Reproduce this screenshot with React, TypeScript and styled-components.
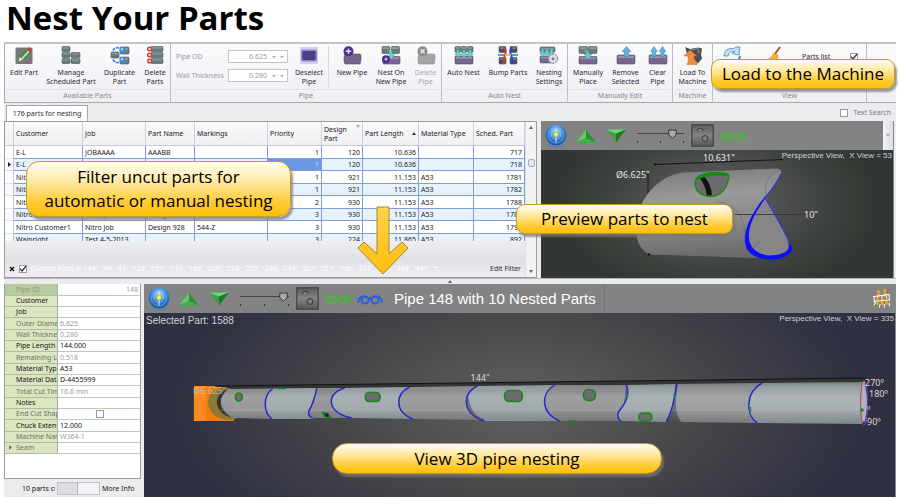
import React from 'react';
import styled, { createGlobalStyle, css } from 'styled-components';

const UI = '"Noto Sans", "Open Sans", sans-serif';
const ARIAL = '"Liberation Sans", Arial, sans-serif';
const DISPLAY = '"Open Sans", "Noto Sans", sans-serif';

const GlobalStyle = createGlobalStyle`
  *, *::before, *::after { box-sizing: border-box; }
  body { margin: 0; background: #fff; font-family: ${UI}; font-size: 7px; line-height: 9px; color: #2f2838; }
  button, input { font: inherit; color: inherit; margin: 0; padding: 0; }
  button { background: none; border: 0; }
`;

/* ---------- page frame ---------- */

const Page = styled.main`
  position: relative;
  padding: 0 4px 4px;
  overflow: hidden;
`;

const Title = styled.h1`
  margin: 0;
  padding-left: 2px;
  font: 700 33px/36px ${DISPLAY};
  padding-bottom: 6px;
  color: #000;
`;

const AppWindow = styled.div`
  background: #ececee;
`;

/* ---------- ribbon ---------- */

const Ribbon = styled.header`
  display: flex;
  border: 1px solid #a9abb2;
  border-width: 2px 0 1px 1px;
  border-top-color: #c4c5ca;
  background: linear-gradient(#fbfbfd, #eeeff3);
`;

const Group = styled.section<{ $grow?: boolean }>`
  display: flex;
  flex-direction: column;
  flex: ${p => (p.$grow ? '1 0 auto' : '0 0 auto')};
  border-right: 1px solid #bcbdc8;
`;

const GroupBody = styled.div`
  display: flex;
  height: 45px;
`;

const GroupName = styled.h2`
  margin: 0 2px;
  height: 13px;
  border-top: 1px solid #e2e2e8;
  font: 400 7px/12px ${UI};
  text-align: center;
  color: #85858f;
`;

const RibbonButton = styled.button<{ $w: number }>`
  display: flex;
  flex-direction: column;
  align-items: center;
  width: ${p => p.$w}px;
  padding-top: 2px;
  gap: 3px;
  white-space: pre;
  text-align: center;
  svg { display: block; width: 20px; height: 19px; }
  &:disabled { color: #a9a9b0; }
`;

const RibbonEnd = styled.div`
  flex: none;
  width: 29px;
`;

const Divider = styled.span`
  width: 1px;
  margin: 2px 3px 2px 0;
  background: #d8d8e0;
`;

const Fields = styled.div`
  display: grid;
  grid-template-columns: 52px 60px;
  grid-auto-rows: 13px;
  row-gap: 6px;
  align-items: center;
  padding: 6px 2px 0 5px;
  color: #9a9aa4;
  label { white-space: nowrap; }
`;

const SpinBox = styled.span`
  display: flex;
  align-items: center;
  height: 13px;
  border: 1px solid #c3c3ca;
  background: #fff;
  input { width: 38px; border: 0; background: none; text-align: right; outline: 0; }
  svg { width: 20px; height: 6px; }
`;

const ViewOptions = styled.div`
  display: flex;
  align-items: flex-start;
  padding: 8px 0 0 3px;
  label { display: flex; gap: 20px; align-items: center; white-space: nowrap; }
`;

const CHECK = `url("data:image/svg+xml,%3Csvg xmlns='http://www.w3.org/2000/svg' viewBox='0 0 8 8'%3E%3Cpath d='M1.2 3.6 3 6 7.4.6' fill='none' stroke='%23222' stroke-width='1.2'/%3E%3C/svg%3E")`;

const Check = styled.input.attrs({ type: 'checkbox' })`
  appearance: none;
  flex: none;
  width: 8px;
  height: 8px;
  border: 1px solid #9a9aa2;
  background: #fff;
  &:checked { background: #fff ${CHECK} center / 8px 8px no-repeat; }
`;

/* ---------- tab strip ---------- */

const TabStrip = styled.nav`
  display: flex;
  justify-content: space-between;
  align-items: flex-end;
  height: 18px;
  padding: 0 5px 0 2px;
`;

const Tab = styled.button`
  height: 16px;
  width: 82px;
  border: 1px solid #a5a7ae;
  border-bottom: 0;
  background: #fff;
  line-height: 15px;
  text-align: center;
`;

const SearchToggle = styled.label`
  display: flex;
  align-items: center;
  gap: 6px;
  height: 17px;
  color: #777781;
`;

/* ---------- upper work area ---------- */

const UpperPane = styled.div`
  display: grid;
  grid-template-columns: minmax(0, 533fr) 4px minmax(0, 353fr) 2px;
  height: 157px;
`;

const Panel = styled.section`
  display: flex;
  flex-direction: column;
  min-width: 0;
  border: 1px solid #9a9ca4;
  background: #fff;
`;

const GridRow = styled.div`
  display: flex;
  flex: 1;
  min-height: 0;
`;

const GridMain = styled.div`
  display: flex;
  flex-direction: column;
  flex: 1;
  min-width: 0;
`;

const TableClip = styled.div`
  height: 119px;
  overflow: hidden;
`;

const PartsTable = styled.table`
  width: 100%;
  table-layout: fixed;
  border-collapse: separate;
  border-spacing: 0;
  color: #1c1824;
`;

const HeadCell = styled.th`
  height: 24px;
  padding: 0 2px;
  border-right: 1px solid #cfd0d8;
  border-bottom: 1px solid #c7c9d2;
  background: linear-gradient(#fafafb, #f0f0f3);
  font-weight: 400;
  text-align: left;
  white-space: nowrap;
  line-height: 9px;
  overflow: hidden;
`;

const HeadInner = styled.span<{ $top?: boolean }>`
  display: flex;
  align-items: center;
  justify-content: space-between;
  white-space: pre;
  svg { width: 4px; height: 3px; flex: none; ${p => p.$top && 'align-self: flex-start;'} }
`;

const BodyRow = styled.tr`
  height: 12px;
  &:nth-child(odd) { height: 13px; }
  &:nth-child(even) td { background: #e6f2fe; }
`;

const Cell = styled.td<{ $num?: boolean }>`
  padding: 0 2px;
  border-right: 1px solid #7f9ddb;
  border-bottom: 1px solid #7f9ddb;
  text-align: ${p => (p.$num ? 'right' : 'left')};
  white-space: nowrap;
  overflow: hidden;
  line-height: 9px;
  ${BodyRow}:nth-child(even) &[aria-selected='true'] { background: #6b97e4; color: #cfe0ff; }
`;

const MarkCell = styled.td`
  padding: 0;
  border-right: 1px solid #c7c9d2;
  border-bottom: 1px solid #e3e4ea;
  text-align: center;
  ${BodyRow}:nth-child(even) && { background: #fafafb; }
  svg { display: block; width: 3px; height: 5px; margin: 0 auto; }
`;

const GridGap = styled.div`
  flex: 1;
  background: linear-gradient(#efeff1, #dfe0e4);
`;

const FilterBar = styled.div`
  display: flex;
  align-items: center;
  gap: 4px;
  height: 17px;
  padding: 0 4px;
  background: linear-gradient(#e0e1e5, #eeeef0);
  svg { width: 6px; height: 6px; flex: none; }
`;

const FilterText = styled.span`
  flex: 1;
  overflow: hidden;
  white-space: nowrap;
  color: #fff;
`;

const ScrollBar = styled.div`
  display: flex;
  flex-direction: column;
  align-items: center;
  justify-content: space-between;
  width: 11px;
  padding: 4px 0;
  background: #f3f3f5;
  border-left: 1px solid #e0e0e4;
  svg { width: 4px; height: 3px; }
`;

const ScrollThumb = styled.span`
  width: 7px;
  height: 8px;
  margin: 30px 0 auto;
  border: 1px solid #a9abb4;
  border-radius: 2px;
  background: #e4e5ea;
`;

const Splitter = styled.div<{ $vertical?: boolean }>`
  display: flex;
  align-items: center;
  justify-content: center;
  background: #ececee;
  ${p => !p.$vertical && css`height: 6px; border-top: 1px solid #b6b7bd;`}
  svg { width: 4px; height: 3px; }
`;

/* ---------- 3D viewers ---------- */

const Viewer = styled.section`
  display: flex;
  flex-direction: column;
  min-width: 0;
  border-right: 1px solid #888;
`;

const ViewerBar = styled.div`
  display: flex;
  align-items: center;
  height: 29px;
  padding-left: 4px;
  background: #838383;
`;

const Tool = styled.button<{ $w: number }>`
  display: flex;
  align-items: center;
  justify-content: center;
  flex: none;
  width: ${p => p.$w}px;
  height: 26px;
  svg { display: block; flex: none; }
`;

const THUMB = `url("data:image/svg+xml,%3Csvg xmlns='http://www.w3.org/2000/svg' viewBox='0 0 9 12'%3E%3Cpath d='M.8 1h7.4v5L4.5 9.2.8 6z' fill='%23aaa' stroke='%23333'/%3E%3C/svg%3E")`;

const SliderBox = styled.span<{ $w: number }>`
  display: flex;
  flex-direction: column;
  flex: none;
  width: ${p => p.$w}px;
  margin: 1px 6px 0 10px;
  input {
    appearance: none;
    width: 100%;
    height: 12px;
    background: linear-gradient(#444, #444) center 4px / 100% 1px no-repeat;
  }
  input::-webkit-slider-thumb {
    appearance: none;
    width: 9px;
    height: 12px;
    background: ${THUMB};
  }
`;

const Ticks = styled.span`
  display: flex;
  justify-content: space-between;
  height: 2px;
  i { width: 1px; background: #333; }
`;

const BarEnd = styled.button`
  align-self: stretch;
  width: 10px;
  margin-left: auto;
  background: linear-gradient(90deg, #f4f5f9, #d9dce8);
  svg { display: block; width: 4px; height: 3px; margin: auto; }
`;

const ViewerTitle = styled.h2`
  margin: 0;
  padding: 0 8px 0 11px;
  border-right: 1px solid #757575;
  font: 400 15px/28px ${ARIAL};
  color: #fff;
  white-space: nowrap;
`;

const EndTool = styled.button`
  margin: 0 3px 0 auto;
  svg { display: block; width: 20px; height: 22px; }
`;

const Scene = styled.div<{ $kind: 'part' | 'pipe' }>`
  position: relative;
  flex: 1;
  min-height: 0;
  background: ${p =>
    p.$kind === 'part'
      ? 'radial-gradient(ellipse 46% 75% at 50% 42%, #636463, #484b48 50%, #303631)'
      : 'radial-gradient(ellipse 46% 95% at 50% 50%, #606060, #48484a 50%, #2f3041)'};
  > svg { display: block; width: 100%; height: 100%; }
`;

const SceneNote = styled.p<{ $side: 'left' | 'right'; $large?: boolean }>`
  position: absolute;
  top: 1px;
  ${p => p.$side}: ${p => (p.$side === 'left' ? 2 : 1)}px;
  margin: 0;
  font: ${p => (p.$large ? '400 10px/13px' : '400 8px/9px')} ${ARIAL};
  white-space: pre;
  color: #d2d2d6;
`;

/* ---------- lower work area ---------- */

const LowerPane = styled.div`
  display: grid;
  grid-template-columns: 137px minmax(0, 1fr);
  column-gap: 3px;
  height: 213px;
`;

const Side = styled.aside`
  display: flex;
  flex-direction: column;
  min-width: 0;
`;

const PropertyList = styled.dl`
  flex: 1;
  margin: 0;
  border: 1px solid #9a9ca4;
  border-top: 0;
  background: #fff;
`;

const Property = styled.div<{ $dim?: boolean; $head?: boolean }>`
  display: grid;
  grid-template-columns: 53px minmax(0, 1fr);
  height: 11px;
  line-height: 10px;
  color: ${p => (p.$dim ? '#9b9ba3' : '#181420')};
  &:nth-child(3n + 1) { height: 12px; line-height: 11px; }
  dt {
    display: flex;
    overflow: hidden;
    white-space: nowrap;
    border-right: 1px solid #9db4b4;
    border-bottom: 1px solid #a9bf9f;
    background: ${p => (p.$head ? '#b9c9a0' : '#dbe5bf')};
    color: ${p => (p.$head ? '#8b9a82' : p.$dim ? '#697563' : '#181420')};
  }
  dd {
    margin: 0;
    padding: 0 2px;
    border-bottom: 1px solid #b9cdb4;
    text-align: ${p => (p.$head ? 'right' : 'left')};
  }
  dd input { display: block; margin: 1px auto 0 36px; }
`;

const Expander = styled.span`
  flex: none;
  width: 11px;
  svg { width: 3px; height: 5px; margin-left: 4px; }
`;

const SideFooter = styled.footer`
  display: grid;
  grid-template-columns: 33px 43px 1fr;
  align-items: center;
  gap: 2px;
  height: 18px;
  padding-left: 18px;
  white-space: nowrap;
  color: #181420;
  span { overflow: hidden; }
`;

const Toggle = styled.button`
  height: 13px;
  border: 1px solid #c3c4ca;
  background: linear-gradient(90deg, #dcdde2 19px, #b6b7be 19px 20px, #f3f3f6 20px);
`;

/* ---------- callouts ---------- */

const Callout = styled.p<{ $x: number; $y: number; $w: number; $h: number }>`
  position: absolute;
  left: ${p => p.$x}px;
  top: ${p => p.$y}px;
  display: flex;
  align-items: center;
  justify-content: center;
  width: ${p => p.$w}px;
  height: ${p => p.$h}px;
  margin: 0;
  border: 1px solid #c79a2b;
  border-radius: ${p => (p.$w > 300 ? 15 : p.$h > 40 ? 13 : 9)}px;
  background: linear-gradient(#fffdf3, #ffe9a6 35%, #ffcb32 75%, #ffbf0a);
  box-shadow: 2px 3px 2px rgba(120, 120, 120, 0.75);
  font: 400 17px/24px ${DISPLAY};
  text-align: center;
  white-space: pre;
  color: #000;
`;

const FlowArrow = styled.svg`
  position: absolute;
  left: 356px;
  top: 205px;
  width: 54px;
  height: 71px;
`;

/* ---------- ribbon drawings ---------- */

type Pt = [number, number, number, number];
const Block = ({ b, c = '#647b78' }: { b: Pt; c?: string }) => (
  <g>
    <rect x={b[0]} y={b[1]} width={b[2]} height={b[3]} rx="1" fill={c} stroke="#4d5560" strokeWidth=".6" />
    <rect x={b[0] + 0.8} y={b[1] + 0.8} width={b[2] - 1.6} height={b[3] * 0.25} fill="#fff" opacity=".28" />
  </g>
);
const PURPLE = '#776690';
const Ico = ({ children }: { children: React.ReactNode }) => (
  <svg viewBox="0 0 20 19" aria-hidden="true">{children}</svg>
);
const Down = ({ x, y }: { x: number; y: number }) => (
  <path d={`M${x - 1.2} ${y}h2.4v4h2L${x} ${y + 7.5}l-3.2-3.5h2z`} fill="#6fd6cf" stroke="#3b9b9a" strokeWidth=".5" />
);
const Up = ({ x, s = 1 }: { x: number; s?: number }) => (
  <path d={`M${x} .5l${4.4 * s} 5h-${2.2 * s}v5h-${4.4 * s}v-5h-${2.2 * s}z`} fill="#63b5d8" stroke="#3d8cb4" strokeWidth=".6" />
);

const EditIcon = () => (
  <Ico>
    <rect x="1.5" y="1.5" width="17" height="16.5" rx="1.5" fill="#7c7876" />
    <path d="M4.5 15.5l1.2-4.5 8-8 3 3-8 8z" fill="#3da045" stroke="#2a5a2c" strokeWidth=".5" />
    <path d="M7 12.5l7.5-8 1.2 1.2-7.5 8z" fill="#c4ebb0" />
    <path d="M4.5 15.5l1.2-4.5 3 3z" fill="#f7ecd8" />
    <path d="M13.2 3.4l1.9-2.2 3 3-2 2.1z" fill="#d23b35" />
  </Ico>
);
const ManageIcon = () => (
  <Ico>
    <Block b={[1, 0.5, 8, 5]} /><Block b={[1, 6.5, 8, 5]} /><Block b={[1, 12.5, 8, 5]} />
    <Block b={[10, 6.5, 9, 5]} /><Block b={[10, 12.5, 9, 5]} />
  </Ico>
);
const DuplicateIcon = () => (
  <Ico>
    <Block b={[1, 6, 8, 6]} /><Block b={[10, 1, 9, 7]} /><Block b={[10, 11, 9, 7]} />
    <path d="M3 4.5Q5 .8 9 2M3 13.5q2 3.5 6 3" fill="none" stroke="#3888dc" strokeWidth="1.7" strokeDasharray="3 1" />
    <circle cx="12.5" cy="4" r="3" fill="#3a8ee8" /><circle cx="12.5" cy="14" r="3" fill="#3a8ee8" />
    <circle cx="12" cy="3.2" r="1.1" fill="#c6e4ff" /><circle cx="12" cy="13.2" r="1.1" fill="#c6e4ff" />
  </Ico>
);
const DeletePartsIcon = () => (
  <Ico>
    {[0.5, 6.5, 12.5].map(y => (
      <g key={y}>
        <Block b={[6, y, 12, 5]} />
        <circle cx="4.6" cy={y + 2.5} r="2.6" fill="#d43a3a" />
        <path d={`M3.6 ${y + 1.5}l2 2m0-2l-2 2`} stroke="#fff" strokeWidth=".9" />
      </g>
    ))}
  </Ico>
);
const DeselectIcon = () => (
  <Ico>
    <rect x="1" y="1" width="18" height="17" fill="#d3d0ec" />
    <rect x="2" y="3.5" width="16" height="12" rx="2" fill="#8f85c4" />
    <rect x="3.5" y="5" width="13" height="9" rx="1" fill="#4b3f86" />
  </Ico>
);
const PipeBody = ({ c, line = '#4d4660' }: { c: string; line?: string }) => (
  <path d="M3 5h6l1 3h8q1.5 1 1 5t-1 5H3Q1.5 16 2 12z" fill={c} stroke={line} strokeWidth=".6" />
);
const NewPipeIcon = () => (
  <Ico>
    <PipeBody c={PURPLE} />
    <circle cx="6.5" cy="5.2" r="5" fill="#4b2e8e" />
    <path d="M3.7 5.2h5.6M6.5 2.4V8" stroke="#e6dcff" strokeWidth="1.4" />
  </Ico>
);
const NestOnIcon = () => (
  <Ico>
    <Block b={[1, 0.5, 8, 7]} /><Block b={[10.5, 0.5, 8, 7]} />
    <Block b={[2, 10.5, 17, 7.5]} c={PURPLE} />
    <circle cx="5" cy="13.2" r="4" fill="#4b2e8e" /><circle cx="5" cy="13.2" r="1.4" fill="#cdbcf2" />
    <path d="M7 4q3-1 4.500 3V8h2.700l-3.700 5L6.800 8h2q0-2-1.800-4z" fill="#68d0c9" />
  </Ico>
);
const DeletePipeIcon = () => (
  <Ico>
    <PipeBody c="#a5a5a7" line="#8a8a8c" />
    <circle cx="6.5" cy="5.2" r="5" fill="#8b8b8e" />
    <path d="M4.5 3.2l4 4m0-4l-4 4" stroke="#eee" strokeWidth="1.4" />
  </Ico>
);
const AutoNestIcon = () => (
  <Ico>
    <Block b={[1, 0.5, 5.5, 6]} /><Block b={[7.2, 0.5, 5.5, 6]} /><Block b={[13.5, 0.5, 5.5, 6]} />
    <Block b={[1, 10, 18, 8]} c={PURPLE} />
    <Down x={4} y={4} /><Down x={10} y={4} /><Down x={16} y={4} />
  </Ico>
);
const BumpIcon = () => (
  <Ico>
    <Block b={[1, 0.5, 7, 6]} c="#4a4f55" /><Block b={[12, 0.5, 7, 6]} c="#4a4f55" />
    <Block b={[1, 11.5, 7, 6.5]} c="#4a4f55" /><Block b={[12, 11.5, 7, 6.5]} c="#4a4f55" />
    <path d="M0 9h8m4 0h8" stroke="#42a8e8" strokeWidth="2" />
    <path d="M6 1q3 4 1 8t-1 9" fill="none" stroke="#e23838" strokeWidth="1.8" />
    <path d="M14 1q-3 4-1 8t1 9" fill="none" stroke="#2b3fd6" strokeWidth="1.8" />
    <path d="M7 9h6" stroke="#f3c23b" strokeWidth="2" />
  </Ico>
);
const SettingsIcon = () => (
  <Ico>
    <Block b={[1, 1, 15, 5]} /><Block b={[1, 10, 12, 7]} c={PURPLE} />
    <Down x={3.5} y={3} /><Down x={8} y={3} /><Down x={12.5} y={3} />
    <circle cx="14" cy="12.7" r="4.3" fill="#dfe1e6" stroke="#8f949e" strokeWidth="2" strokeDasharray="1.7 1" />
    <circle cx="14" cy="12.7" r="3.8" fill="#dfe1e6" /><circle cx="14" cy="12.7" r="1.5" fill="#7c808b" />
  </Ico>
);
const ManualIcon = () => (
  <Ico>
    <Block b={[1, 0.5, 8.5, 7]} /><Block b={[10.5, 0.5, 8.5, 7]} />
    <Block b={[1, 10.5, 18, 7.5]} c={PURPLE} />
    <path d="M6 4q4-.5 5 4h3l-4 5-4-5h2.500Q8 5.500 6 4z" fill="#68d0c9" stroke="#3b9b9a" strokeWidth=".4" />
  </Ico>
);
const RemoveIcon = () => (<Ico><Block b={[1, 9, 18, 9]} c={PURPLE} /><Up x={10.5} /></Ico>);
const ClearIcon = () => (<Ico><Block b={[1, 9, 18, 9]} c={PURPLE} /><Up x={6} s={0.75} /><Up x={14.5} s={0.75} /></Ico>);
const LoadIcon = () => (
  <Ico>
    <path d="M2 1l5 2 8-1.5 4 1-1 6 1 4-4 5-5-5-5-2z" fill="#4b4f54" />
    <path d="M7 4l8-1.5 1 5" fill="none" stroke="#8a8f96" />
    <path d="M1 10l6-6 7 6h-3q0 5 3 6.5v2H4q2-3.5 1-8.5z" fill="#f38a35" stroke="#c8641a" strokeWidth=".5" />
  </Ico>
);
const RefreshIcon = () => (
  <Ico>
    <path d="M2 10Q2 2.5 10 2.5h1.5L14 1h4l-1 8-7-1.5 3-2Q7 4.5 6 10z" fill="#c3dff5" stroke="#4a88bd" strokeWidth=".8" />
    <path d="M18 10q-1 7-9 6.5" fill="none" stroke="#4a88bd" strokeWidth="2" />
  </Ico>
);
const BroomIcon = () => (
  <Ico>
    <path d="M15 1l-5 7" stroke="#c0392b" strokeWidth="1.8" />
    <path d="M9 7l4 2.5q-1 6-4 7.5l-7-3q5-2 7-7z" fill="#f6b32c" stroke="#b97714" strokeWidth=".6" />
  </Ico>
);

/* ---------- viewer drawings ---------- */

const Globe = () => (
  <svg width="24" height="25" viewBox="0 0 24 25" aria-hidden="true">
    <defs>
      <radialGradient id="globe" cx=".5" cy=".3" r=".75">
        <stop offset="0" stopColor="#9ed2fa" /><stop offset=".5" stopColor="#3583d2" /><stop offset="1" stopColor="#174f9c" />
      </radialGradient>
    </defs>
    <ellipse cx="12" cy="22.5" rx="9" ry="2" fill="#5186bd" opacity=".6" />
    <circle cx="12" cy="12" r="10.5" fill="url(#globe)" />
    <circle cx="12" cy="12.5" r="7.5" fill="none" stroke="#8cc4f2" strokeWidth=".5" />
    <circle cx="12" cy="11.5" r="4.8" fill="none" stroke="#bfe0f8" strokeWidth=".5" />
    <path d="M12 5.5v14" stroke="#dff0ff" strokeWidth=".9" />
    <circle cx="12" cy="11.5" r="2.8" fill="#b9d84a" /><circle cx="12" cy="11.5" r="1.2" fill="#f4ff9c" />
  </svg>
);
const Triangle = ({ down }: { down?: boolean }) => (
  <svg width="22" height="14" viewBox="0 0 22 14" aria-hidden="true">
    {down ? (
      <><path d="M1 .5h20L11 13.500z" fill="#41a047" /><path d="M1 .5h20L11 4.500z" fill="#76d67a" /><path d="M11 4.500v9L21 .5z" fill="#23762c" /></>
    ) : (
      <><path d="M1 13.500h20L11 .5z" fill="#2c9034" /><path d="M1 13.500L11 .5v8.500z" fill="#67c96c" /><path d="M1 13.500h20L11 9z" fill="#41b148" /></>
    )}
  </svg>
);
const HoleToggle = () => (
  <svg width="23" height="23" viewBox="0 0 23 23" aria-hidden="true">
    <defs>
      <linearGradient id="steel" x1="0" y1="0" x2="0" y2="1">
        <stop offset="0" stopColor="#595959" /><stop offset=".5" stopColor="#848484" /><stop offset="1" stopColor="#565656" />
      </linearGradient>
    </defs>
    <rect x=".8" y=".8" width="21.4" height="21.4" fill="url(#steel)" stroke="#434343" strokeWidth="1.2" />
    <path d="M6.500 7q-.5-2.500 2.500-2.700T12 7" fill="#858585" stroke="#333" />
    <circle cx="14" cy="14.5" r="2.9" fill="#808080" stroke="#333" />
  </svg>
);
const Glasses = ({ color }: { color: string }) => (
  <svg width="26" height="14" viewBox="0 0 26 14" fill="none" stroke={color} strokeWidth="2" aria-hidden="true">
    <circle cx="8" cy="8" r="3.5" /><circle cx="18" cy="8" r="3.5" />
    <path d="M11.500 6.500q1.500-1.200 3 0M1.500 11Q1 5.500 5.500 4.500H8M24.500 11q.5-5.500-4-6.500H18" />
  </svg>
);
const People = () => (
  <svg viewBox="0 0 22 22" aria-hidden="true">
    {[[6, 1], [13, 0]].map(([x, y]) => (
      <g key={x} fill="#f5a81f"><circle cx={x + 1} cy={y + 2} r="1.7" /><rect x={x - 0.5} y={y + 4} width="3.2" height="4" /></g>
    ))}
    <path d="M1 8.500l18-2.500M2 13.500l18-1.500M2.500 8v7M19 6v6M6 8v5M11 7.500v5M16 7v5" stroke="#fff" strokeWidth="1.1" />
    {[5, 10, 15].map(x => (
      <g key={x} fill="#f5a81f"><circle cx={x + 1} cy="11" r="1.3" /><rect x={x - 0.3} y="13" width="2.6" height="4.5" /></g>
    ))}
    <path d="M2 18l2.500-4M8 20.500l1-4M13.500 20.500v-4M19 19v-4" stroke="#fff" strokeWidth="1.1" />
  </svg>
);
const Caret = ({ d, c = '#666' }: { d: 'up' | 'down'; c?: string }) => (
  <svg viewBox="0 0 4 3" aria-hidden="true"><path d={d === 'up' ? 'M0 3h4L2 0z' : 'M0 0h4L2 3z'} fill={c} /></svg>
);

const PartScene = () => (
  <svg viewBox="0 0 352 125" role="img" aria-label="Part preview">
    <defs>
      <linearGradient id="part" x1="0" y1="0" x2=".15" y2="1">
        <stop offset="0" stopColor="#7c7c7c" /><stop offset=".35" stopColor="#a0a0a0" /><stop offset=".7" stopColor="#8c8c8c" /><stop offset="1" stopColor="#707070" />
      </linearGradient>
    </defs>
    <path d="M107 42L107 22M114 13L242 8" stroke="#151515" strokeWidth="1" />
    <path d="M107 42Q121 24 142 21L236 17Q241 18 240 22Q238 30 224 46L250 94Q252 100 244 104Q236 108 227 107L109 103Q98 98 96 86Q93 60 107 42z" fill="url(#part)" opacity=".9" />
    <path d="M224 46Q206 70 205 88Q207 105 227 107Q247 106 249 98Q240 70 224 46z" fill="#868686" />
    <path d="M240 18Q222 22 225 46M111 103q34-2 55-32M176 50q30 5 28 40M186 100q24 5 34-12" fill="none" stroke="#6d6d6d" strokeWidth="1" opacity=".7" />
    <path d="M194 63h67" stroke="#303030" strokeWidth=".8" />
    <circle cx="108" cy="103" r="1.2" fill="#111" /><circle cx="114" cy="13" r="1.2" fill="#111" />
    <path d="M154 31Q155 22 172 21.500Q190 20 188 26Q184 44 170 45Q154 44 154 31z" fill="#6c6c6c" />
    <path d="M159 27Q164 33 166 44L171 44Q170 32 163 25z" fill="#111" />
    <path d="M154 31Q155 22 172 21.500Q190 20 188 26Q184 44 170 45Q154 44 154 31z" fill="none" stroke="#178a1c" strokeWidth="1.4" />
    <path d="M155 29Q158 21 174 20.500Q188 20 188 25Q168 22 155 29z" fill="#178a1c" />
    <path d="M176 88v7" stroke="#4c9a50" strokeDasharray="1 1" />
    <path d="M240 22Q236 32 224 46L249 90" fill="none" stroke="#3030e0" strokeWidth="1.1" />
    <path d="M224 45C210 62 203 78 204 90C205 104 218 108 230 108Q252 107 251 95L247 90Q252 103 228 104Q210 102 208 87C207 76 212 64 224 47z" fill="#0c0cff" />
    <g fill="#e4e4e4" fontFamily="Noto Sans, sans-serif" fontSize="9">
      <text x="162" y="9">10.631"</text><text x="75" y="26">Ø6.625"</text><text x="263" y="66">10"</text>
    </g>
  </svg>
);

const BLUE = '#2a2ac6';
const Hole = ({ x, y, w, h }: { x: number; y: number; w: number; h: number }) => (
  <rect x={x - w / 2} y={y - h / 2} width={w} height={h} rx={h / 2.3} fill="#6d6b6d" stroke="#128a18" strokeWidth="1.5" />
);
const PipeScene = () => (
  <svg viewBox="0 0 752 184" role="img" aria-label="Pipe nesting">
    <defs>
      <linearGradient id="shade" x1="0" y1="0" x2="0" y2="1">
        <stop offset="0" stopColor="#000" stopOpacity=".25" /><stop offset=".2" stopColor="#fff" stopOpacity=".06" />
        <stop offset=".36" stopColor="#fff" stopOpacity=".22" /><stop offset=".62" stopColor="#fff" stopOpacity=".16" />
        <stop offset="1" stopColor="#000" stopOpacity=".15" />
      </linearGradient>
    </defs>
    <rect x="50" y="73" width="40" height="35" fill="#f27c0c" />
    <path d="M50 73h12v35H50z" fill="#fb8a1e" />
    <path d="M88 74Q65 72 64 90Q66 106 86 107L92 106V74z" fill="#8e7a35" />
    <path d="M90 75Q72 77 73 91Q76 103 90 105z" fill="#373737" />
    <path d="M71 73L721 65V70L90 76z" fill="#333436" />
    <path d="M84 76L130 75.500L128 106L88 105Q68 91 84 76z" fill="#868688" />
    <path d="M129 75.500C119 82 119 99 128 106L170 106L165 100L173 75z" fill="#909a9e" />
    <path d="M173 75Q170 90 165 98Q164 104 169 105H210L201 75z" fill="#7f7f81" />
    <path d="M201 75C182 80 182 100 208 105L270 106L266 74z" fill="#909a9e" />
    <path d="M266 74C251 81 251 99 269 106L341 107L334 73z" fill="#858587" />
    <path d="M334 73C318 80 318 101 341 108L416 108L411 72z" fill="#909a9e" />
    <path d="M411 72C397 80 397 100 416 108L478 108L483 72z" fill="#858587" />
    <path d="M484 72Q487 84 475 99Q473 106 478 108L523 109Q530 94 533 71z" fill="#949da1" />
    <path d="M533 71Q531 94 523 109H540L536 71z" fill="#525254" />
    <path d="M535 71Q529 100 538 109L614 110L619 70z" fill="#8d8d8f" />
    <path d="M619 70C602 79 602 102 614 110L721 111Q728 90 721 69z" fill="#98a0a4" />
    <path d="M84 76L721 69Q726 90 721 111L88 105Q68 91 84 76z" fill="url(#shade)" />
    <path d="M76 97L720 97" stroke="#c3c6c8" strokeWidth=".6" opacity=".6" />
    <path d="M336 107C322 98 322 90 325 84C326 94 330 102 341 107z" fill="#4a4a4c" opacity=".6" />
    <path d="M71 73L721 65" stroke="#111" />
    <g fill="none" stroke={BLUE} strokeWidth="1.5">
      <path d="M129 75.500C119 82 119 99 128 106" /><path d="M173 75Q170 90 165 98Q164 104 169 105" />
      <path d="M201 75C182 80 182 100 208 105" /><path d="M266 74C251 81 251 99 269 106" />
      <path d="M334 73C318 80 318 101 341 108" /><path d="M411 72C397 80 397 100 416 108" />
      <path d="M483 72Q488 84 475 99Q473 106 478 108" /><path d="M533 71Q531 94 523 109" />
      <path d="M619 70C602 79 602 102 614 110" />
    </g>
    <Hole x={95} y={84} w={7} h={8} /><Hole x={229} y={84} w={15} h={9} /><Hole x={370} y={83} w={18} h={11} />
    <Hole x={446} y={82} w={12} h={11} /><Hole x={502} y={104} w={13} h={8} />
    <path d="M178 99q6-1 10 6h-4q-6-1-6-6z" fill="#128a18" /><circle cx="183" cy="102" r="2" fill="#1c1c70" />
    <path d="M134 75.500h8M424 108h8" stroke="#128a18" strokeWidth="1.5" />
    <path d="M484 81v3M531 81v3M607 94v5" stroke="#128a58" strokeWidth="2" />
    <ellipse cx="721" cy="90" rx="3.5" ry="22" fill="#aeb3b8" stroke="#c23b55" />
    <path d="M722 70q5 20 0 39" fill="none" stroke="#3a3ad8" />
    <circle cx="719" cy="97" r="1.8" fill="#128a18" /><circle cx="721" cy="110" r="1.5" fill="#22f" />
    <g fill="#dadade" fontFamily="Noto Sans, sans-serif" fontSize="9">
      <text x="327" y="68">144"</text><text x="49" y="81" opacity=".55">Ø6.625"</text>
      <text x="722" y="73">270º</text><text x="726" y="84">180º</text><text x="724" y="112">90º</text><text x="724" y="100">º</text>
    </g>
  </svg>
);

/* ---------- data ---------- */

const columns: { name: string; w: number; num?: boolean }[] = [
  { name: 'Customer', w: 69 }, { name: 'Job', w: 63 }, { name: 'Part Name', w: 49 }, { name: 'Markings', w: 73 },
  { name: 'Priority', w: 54, num: true }, { name: 'Design\nPart', w: 41, num: true }, { name: 'Part Length', w: 56, num: true },
  { name: 'Material Type', w: 55 }, { name: 'Sched. Part', w: 51, num: true },
];
const parts: string[][] = [
  ['E-L', 'JOBAAAA', 'AAABB', '', '1', '120', '10.636', '', '717'],
  ['E-L', 'JOBAAAA', 'AAABB', '', '1', '120', '10.636', '', '718'],
  ['Nitro Customer1', 'Nitro Job', 'Design 921', '', '1', '921', '11.153', 'A53', '1781'],
  ['Nitro Customer1', 'Nitro Job', 'Design 921', '', '1', '921', '11.153', 'A53', '1782'],
  ['Nitro Customer1', 'Nitro Job', 'Design 930', '', '2', '930', '11.153', 'A53', '1788'],
  ['Nitro Customer1', 'Nitro Job', 'Design 928', '544-Z', '3', '930', '11.153', 'A53', '1789'],
  ['Nitro Customer1', 'Nitro Job', 'Design 928', '544-Z', '3', '930', '11.153', 'A53', '1790'],
  ['Wainright', 'Test 4-5-2013', '', '', '3', '224', '11.865', 'A53', '892'],
];
const properties: { k: string; v?: string; dim?: boolean; head?: boolean; box?: boolean; tree?: boolean }[] = [
  { k: 'Pipe ID', v: '148', dim: true, head: true }, { k: 'Customer' }, { k: 'Job' },
  { k: 'Outer Diameter', v: '6.625', dim: true }, { k: 'Wall Thickness', v: '0.280', dim: true },
  { k: 'Pipe Length', v: '144.000' }, { k: 'Remaining Length', v: '0.518', dim: true },
  { k: 'Material Type', v: 'A53' }, { k: 'Material Data', v: 'D-4455999' },
  { k: 'Total Cut Time', v: '16.6 min', dim: true }, { k: 'Notes' }, { k: 'End Cut Shape', dim: true, box: true },
  { k: 'Chuck Extension', v: '12.000' }, { k: 'Machine Name', v: 'W364-1', dim: true }, { k: 'Seam', dim: true, tree: true },
];
const filter = "[Design Part] In ('34', '39', '43', '120', '150', '133', '166', '220', '224', '225', '246', '249', '323', '327', '336', '437', '487', '488', '497', '5...";

const Spin = ({ id, value }: { id: string; value: string }) => (
  <SpinBox>
    <input id={id} defaultValue={value} disabled />
    <svg viewBox="0 0 20 6" aria-hidden="true"><path d="M5 2h4L7 4.500zM13 2h4l-2 2.500z" fill="#b4b4bc" /></svg>
  </SpinBox>
);

const Tools = ({ slider, blue }: { slider: number; blue?: boolean }) => (
  <>
    <Tool $w={22} aria-label="Orbit"><Globe /></Tool>
    <Tool $w={38} aria-label="Zoom in"><Triangle /></Tool>
    <Tool $w={22} aria-label="Zoom out"><Triangle down /></Tool>
    <SliderBox $w={slider}>
      <input type="range" aria-label="Transparency" defaultValue={blue ? 98 : 82} />
      <Ticks><i /><i /><i /></Ticks>
    </SliderBox>
    <Tool $w={24} aria-label="Show holes"><HoleToggle /></Tool>
    <Tool $w={38} aria-label="Inspect part"><Glasses color="#48b83c" /></Tool>
    {blue && <Tool $w={26} aria-label="Inspect pipe"><Glasses color="#2a5fe0" /></Tool>}
  </>
);

export default function App() {
  return (
    <Page>
      <GlobalStyle />
      <Title>Nest Your Parts</Title>
      <AppWindow>
        <Ribbon>
          <Group>
            <GroupBody>
              <RibbonButton $w={38}><EditIcon />Edit Part</RibbonButton>
              <RibbonButton $w={56}><ManageIcon />{'Manage\nScheduled Part'}</RibbonButton>
              <RibbonButton $w={41}><DuplicateIcon />{'Duplicate\nPart'}</RibbonButton>
              <RibbonButton $w={30}><DeletePartsIcon />{'Delete\nParts'}</RibbonButton>
            </GroupBody>
            <GroupName>Available Parts</GroupName>
          </Group>
          <Group>
            <GroupBody>
              <Fields>
                <label htmlFor="od">Pipe OD</label><Spin id="od" value="6.625" />
                <label htmlFor="wall">Wall Thickness</label><Spin id="wall" value="0.280" />
              </Fields>
              <RibbonButton $w={38}><DeselectIcon />{'Deselect\nPipe'}</RibbonButton>
              <Divider />
              <RibbonButton $w={40}><NewPipeIcon />New Pipe</RibbonButton>
              <RibbonButton $w={38}><NestOnIcon />{'Nest On\nNew Pipe'}</RibbonButton>
              <RibbonButton $w={31} disabled><DeletePipeIcon />{'Delete\nPipe'}</RibbonButton>
            </GroupBody>
            <GroupName>Pipe</GroupName>
          </Group>
          <Group>
            <GroupBody>
              <RibbonButton $w={43}><AutoNestIcon />Auto Nest</RibbonButton>
              <RibbonButton $w={46}><BumpIcon />Bump Parts</RibbonButton>
              <RibbonButton $w={36}><SettingsIcon />{'Nesting\nSettings'}</RibbonButton>
            </GroupBody>
            <GroupName>Auto Nest</GroupName>
          </Group>
          <Group>
            <GroupBody>
              <RibbonButton $w={40}><ManualIcon />{'Manually\nPlace'}</RibbonButton>
              <RibbonButton $w={35}><RemoveIcon />{'Remove\nSelected'}</RibbonButton>
              <RibbonButton $w={29}><ClearIcon />{'Clear\nPipe'}</RibbonButton>
            </GroupBody>
            <GroupName>Manually Edit</GroupName>
          </Group>
          <Group>
            <GroupBody>
              <RibbonButton $w={39}><LoadIcon />{'Load To\nMachine'}</RibbonButton>
            </GroupBody>
            <GroupName>Machine</GroupName>
          </Group>
          <Group $grow>
            <GroupBody>
              <RibbonButton $w={38} aria-label="Refresh"><RefreshIcon /></RibbonButton>
              <RibbonButton $w={48} aria-label="Clean up"><BroomIcon /></RibbonButton>
              <ViewOptions><label>Parts list<Check defaultChecked /></label></ViewOptions>
            </GroupBody>
            <GroupName>View</GroupName>
          </Group>
          <RibbonEnd />
        </Ribbon>

        <TabStrip>
          <Tab>176 parts for nesting</Tab>
          <SearchToggle><Check />Text Search</SearchToggle>
        </TabStrip>

        <UpperPane>
          <Panel>
            <GridRow>
              <GridMain>
                <TableClip>
                  <PartsTable>
                    <colgroup>
                      <col style={{ width: '9px' }} />
                      {columns.map(c => <col key={c.name} style={{ width: `${(c.w / 520) * 100}%` }} />)}
                    </colgroup>
                    <thead>
                      <tr>
                        <HeadCell aria-label="Row marker" />
                        {columns.map(c => (
                          <HeadCell key={c.name}>
                            <HeadInner $top={c.name.startsWith('Design')}>
                              {c.name}
                              {c.name === 'Part Length' && <Caret d="up" c="#333" />}
                              {c.name.startsWith('Design') && <Caret d="down" c="#9aa2b4" />}
                            </HeadInner>
                          </HeadCell>
                        ))}
                      </tr>
                    </thead>
                    <tbody>
                      {parts.map((row, r) => (
                        <BodyRow key={r}>
                          <MarkCell>{r === 1 && <svg viewBox="0 0 3 5"><path d="M0 0l3 2.500L0 5z" fill="#222" /></svg>}</MarkCell>
                          {row.map((v, i) => (
                            <Cell key={i} $num={columns[i].num} aria-selected={r === 1 && i === 4}>{v}</Cell>
                          ))}
                        </BodyRow>
                      ))}
                    </tbody>
                  </PartsTable>
                </TableClip>
                <GridGap />
                <FilterBar>
                  <svg viewBox="0 0 6 6"><path d="M1 1l4 4m0-4L1 5" stroke="#111" strokeWidth="1.3" /></svg>
                  <Check defaultChecked aria-label="Filter enabled" />
                  <FilterText>{filter}</FilterText>
                  <button>Edit Filter</button>
                </FilterBar>
              </GridMain>
              <ScrollBar><Caret d="up" /><ScrollThumb /><Caret d="down" /></ScrollBar>
            </GridRow>
          </Panel>
          <Splitter $vertical />
          <Viewer>
            <ViewerBar>
              <Tools slider={47} />
              <BarEnd aria-label="More tools"><Caret d="down" c="#a0a4b4" /></BarEnd>
            </ViewerBar>
            <Scene $kind="part">
              <PartScene />
              <SceneNote $side="right">{'Perspective View,  X View = 53'}</SceneNote>
            </Scene>
          </Viewer>
        </UpperPane>

        <Splitter><Caret d="up" /></Splitter>

        <LowerPane>
          <Side>
            <PropertyList>
              {properties.map(p => (
                <Property key={p.k} $dim={p.dim} $head={p.head}>
                  <dt>
                    <Expander>{p.tree && <svg viewBox="0 0 3 5"><path d="M0 0l3 2.500L0 5z" fill="#777" /></svg>}</Expander>
                    {p.k}
                  </dt>
                  <dd>{p.box ? <Check aria-label={p.k} /> : p.v}</dd>
                </Property>
              ))}
            </PropertyList>
            <SideFooter>
              <span>10 parts cut</span>
              <Toggle aria-label="More info" />
              More Info
            </SideFooter>
          </Side>
          <Viewer>
            <ViewerBar>
              <Tools slider={49} blue />
              <ViewerTitle>Pipe 148 with 10 Nested Parts</ViewerTitle>
              <EndTool aria-label="Team"><People /></EndTool>
            </ViewerBar>
            <Scene $kind="pipe">
              <PipeScene />
              <SceneNote $side="left" $large>Selected Part: 1588</SceneNote>
              <SceneNote $side="right">{'Perspective View,  X View = 335'}</SceneNote>
            </Scene>
          </Viewer>
        </LowerPane>
      </AppWindow>

      <Callout $x={26} $y={161} $w={265} $h={56}>{'Filter uncut parts for\nautomatic or manual nesting'}</Callout>
      <Callout $x={711} $y={59} $w={184} $h={30}>Load to the Machine</Callout>
      <Callout $x={516} $y={204} $w={217} $h={30}>Preview parts to nest</Callout>
      <Callout $x={332} $y={443} $w={330} $h={31}>View 3D pipe nesting</Callout>
      <FlowArrow viewBox="0 0 54 71" aria-hidden="true">
        <defs>
          <linearGradient id="flow" x1="0" y1="0" x2="0" y2="1"><stop offset="0" stopColor="#ffd34d" /><stop offset="1" stopColor="#ffbe0a" /></linearGradient>
        </defs>
        <path d="M21 2h12v47l13-12 6 6-25 26L2 43l6-6 13 12z" fill="url(#flow)" stroke="#a8842c" />
      </FlowArrow>
    </Page>
  );
}
